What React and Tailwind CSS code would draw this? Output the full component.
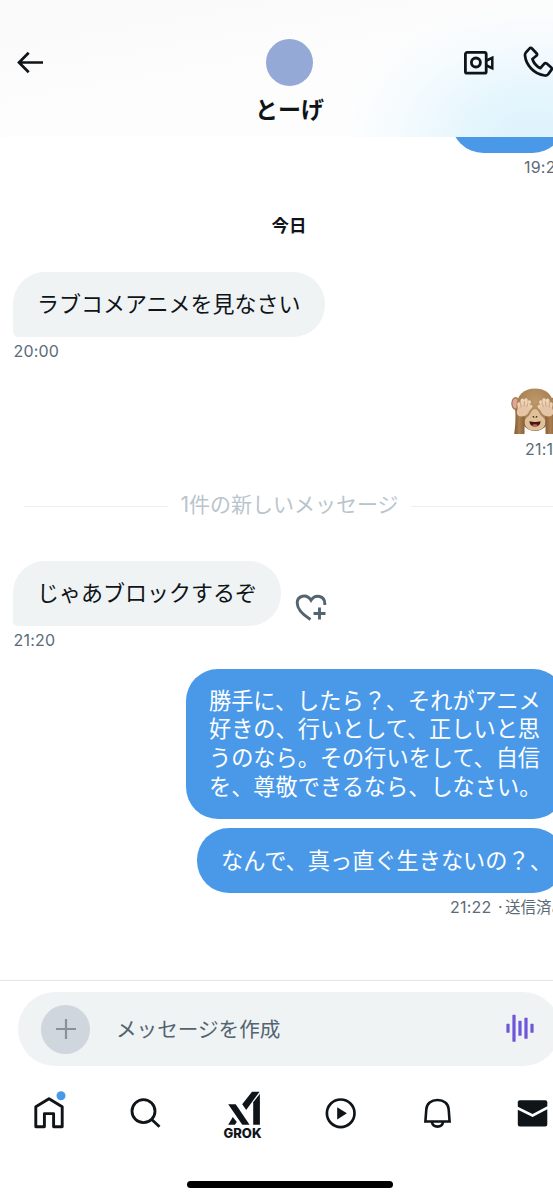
import React from "react";

const INK = "#0f1419";

function Time({ children, className = "" }) {
  return (
    <div className={`h-5 text-[16px] leading-5 tracking-[0.2px] whitespace-nowrap text-[#5b6b78] ${className}`}>
      {children}
    </div>
  );
}

function Incoming({ children }) {
  return (
    <div className="flex h-[65px] items-center rounded-[32px] rounded-bl-[5px] bg-[#eff3f4] px-6 text-[22px] leading-[28.6px] whitespace-nowrap text-[#0f1419]">
      <span className="-mt-px">{children}</span>
    </div>
  );
}

function Paw() {
  return (
    <>
      <path d="M5.200 23C7 20 14.500 23 14.500 30v17H4.200C5.400 40 5.800 30 5.200 23Z" fill="url(#arm)" />
      <g stroke="url(#hand)" strokeWidth="3.500" strokeLinecap="round">
        <path d="M10 24L9 17" />
        <path d="M11.500 23L12.300 13.300" />
        <path d="M13.500 23L16 13" />
        <path d="M15 24L19.300 15" />
        <path d="M15 25.500L20.800 19.500" />
      </g>
      <path d="M7.200 22.500C8.500 17 17 17 19.500 21c.5 4.500-3 8.500-7.800 8.500S6.200 26.500 7.200 22.500Z" fill="#e5c5a6" />
      <path d="M10.800 20L10.700 16M14 19L14.600 14.500M16.800 19.500L18 16" stroke="#bd9270" strokeWidth="0.700" strokeLinecap="round" />
    </>
  );
}

function Monkey() {
  return (
    <svg width="50" height="50" viewBox="0 0 50 50">
      <defs>
        <radialGradient id="fur" cx="50%" cy="30%" r="65%">
          <stop offset="0" stopColor="#bd986a" />
          <stop offset="0.7" stopColor="#a88152" />
          <stop offset="1" stopColor="#896238" />
        </radialGradient>
        <linearGradient id="arm" x1="0" x2="1" y1="0" y2="0">
          <stop offset="0" stopColor="#80592f" />
          <stop offset="0.5" stopColor="#aa8052" />
          <stop offset="1" stopColor="#896038" />
        </linearGradient>
        <linearGradient id="hand" gradientUnits="userSpaceOnUse" x1="0" x2="0" y1="11" y2="28">
          <stop offset="0" stopColor="#f0d6bd" />
          <stop offset="1" stopColor="#e5c5a6" />
        </linearGradient>
      </defs>
      <ellipse cx="5.500" cy="16.500" rx="4.200" ry="6.500" fill="#a27750" />
      <ellipse cx="5.500" cy="16.500" rx="3" ry="5" fill="#e3a39d" />
      <ellipse cx="44.500" cy="16.500" rx="4.200" ry="6.500" fill="#a27750" />
      <ellipse cx="44.500" cy="16.500" rx="3" ry="5" fill="#e3a39d" />
      <path d="M25 1.500C14 1.500 6.500 8 6.500 19c0 13 8 25 18.500 25s18.500-12 18.500-25C43.500 8 36 1.500 25 1.500Z" fill="url(#fur)" />
      <path d="M25 22c-3 0-4 4-6 6.500-3 2.500-4.500 4-4.500 6.500 0 5 4.500 8.500 10.500 8.500S35.500 40 35.500 35c0-2.500-1.500-4-4.500-6.500-2-2.500-3-6.500-6-6.500Z" fill="#dfc19c" />
      <path d="M19.500 34.300c3.500 1 7.500 1 11 0 .2 3-2.200 5.300-5.500 5.300s-5.700-2.300-5.500-5.300Z" fill="#45180f" />
      <path d="M22 38c1.800-1 4.200-1 6 0-1.500 1.700-4.500 1.700-6 0Z" fill="#d2645c" />
      <path d="M23.300 29.700l.4.300M26.700 29.700l-.4.300" stroke="#493020" strokeWidth="1.500" strokeLinecap="round" />
      <Paw />
      <g transform="matrix(-1 0 0 1 50 0)">
        <Paw />
      </g>
    </svg>
  );
}

function Header() {
  return (
    <header className="flex h-[137px] shrink-0 items-start bg-[radial-gradient(ellipse_190px_135px_at_92%_100%,#dcf2fc_0%,#e6f6fd_35%,#f5fbfe_70%,#ffffff00_100%),linear-gradient(170deg,#f9f9f9_0%,#fdfdfd_55%,#fefefe_100%)]">
      <div className="w-[193px] pt-[46px] pl-[14px]">
        <svg width="32" height="32" viewBox="0 0 32 32" fill="none" stroke={INK} strokeWidth="2.700">
          <path d="M29 16.500H5M14.700 6.700L5 16.500l9.700 9.700" />
        </svg>
      </div>
      <div className="flex w-[193px] flex-col items-center pt-[38.500px]">
        <div className="size-[47.500px] rounded-full bg-[#94a9d5]" />
        <div className="mt-[9px] text-[23px] leading-[30px] font-bold text-[#0f1419]">とーげ</div>
      </div>
      <div className="flex w-[192px] justify-end gap-[25px] pt-[44px] pr-[23px]">
        <svg width="34" height="36" viewBox="0 0 34 36" fill="none" stroke={INK} strokeWidth="2.800">
          <rect x="3.400" y="8.400" width="20.800" height="20.800" rx="1.800" />
          <circle cx="13.900" cy="18.500" r="4.500" />
          <path d="M24.500 16.500l5.800-2.700v10.400l-5.800-2.700" strokeWidth="2.500" />
        </svg>
        <svg width="34" height="36" viewBox="0 0 34 36" fill="none" stroke={INK} strokeWidth="2.700" strokeLinejoin="round">
          <path d="M8.400 4.600c.8-.9 1.800-.9 2.600-.1l4.500 4.700c.8.900.7 1.800-.1 2.600l-4 3.200c1.300 4.200 4 7.300 8 9.200l3.700-4.400c.7-.8 1.700-.9 2.600-.2l4.300 3.700c.9.800 1 1.800.2 2.800l-3 4.200c-.8 1.100-2 1.400-3.400 1.200C12.700 29.900 5 21 4 11.500c-.1-1.200.2-2.200 1-3.100l3.400-3.800Z" />
        </svg>
      </div>
    </header>
  );
}

function Thread() {
  return (
    <main className="flex h-[843px] shrink-0 flex-col px-[13px]">
      <div className="flex h-[15.500px] items-end justify-end overflow-hidden">
        <div className="h-[65px] w-[114px] shrink-0 rounded-[34px] bg-[#4a99e9]" />
      </div>
      <Time className="mt-[4.500px] pl-[511px]">19:26</Time>
      <div className="mt-[36.500px] h-6 text-center text-[17.500px] leading-6 font-bold text-[#0f1419]">今日</div>
      <div className="mt-[34.500px] flex">
        <Incoming>ラブコメアニメを見なさい</Incoming>
      </div>
      <Time className="mt-[4px] pl-[0.500px]">20:00</Time>
      <div className="mt-[26px] flex pl-[497px]">
        <Monkey />
      </div>
      <Time className="mt-[2px] pl-[512px]">21:10</Time>
      <div className="mt-[30px] flex h-[30px] items-center gap-[11px] pl-[11px] text-[21px] text-[#b9c5cd]">
        <div className="mt-[4px] h-px w-[144px] bg-[#eceeef]" />
        <span className="mt-[2px] w-[221px] text-center leading-[30px] whitespace-nowrap">1件の新しいメッセージ</span>
        <div className="mt-[4px] h-px flex-1 bg-[#eceeef]" />
      </div>
      <div className="mt-[42px] flex items-center gap-[13px]">
        <Incoming>じゃあブロックするぞ</Incoming>
        <svg className="mt-[29px]" width="34" height="32" viewBox="0 0 34 32" fill="none" stroke="#536471" strokeWidth="2.900">
          <path d="M16.500 27.500C8.500 22.500 3.200 16.500 3.200 11c0-7.500 9.500-9.600 13.800-2.700C21.300 1.400 30.800 4 30.800 11.500v1.500" />
          <path d="M25.500 15.500v12M19.500 21.500h12" />
        </svg>
      </div>
      <Time className="mt-[4px] pl-[0.500px]">21:20</Time>
      <div className="mt-[19px] flex h-[150px] w-[379px] items-center self-end rounded-[32px] bg-[#4a99e9] pl-[23px] text-[22.200px] leading-[28.600px] whitespace-nowrap text-white">
        <p>
          勝手に、したら？、それがアニメ<br />
          好きの、行いとして、正しいと思<br />
          うのなら。その行いをして、自信<br />
          を、尊敬できるなら、しなさい。
        </p>
      </div>
      <div className="mt-[9px] flex h-[65px] w-[368px] items-center self-end rounded-[32px] bg-[#4a99e9] pl-6 text-[22.200px] whitespace-nowrap text-white">
        <span>なんで、真っ直ぐ生きないの？、</span>
      </div>
      <Time className="mt-[4px] pl-[437px]">
        21:22 <span className="ml-[2px]">·</span><span className="ml-[2px] text-[15.500px] tracking-normal">送信済み</span>
      </Time>
    </main>
  );
}

const bars = [
  [8, 9],
  [14, 27],
  [20, 15],
  [26, 21],
  [32, 9],
];

function Composer() {
  return (
    <div className="h-[86px] shrink-0 border-t border-[#e4e7e9] px-[18px] pt-[11px]">
      <div className="flex h-[74px] items-center rounded-full bg-[#eff3f4] pr-[20px] pl-[23px]">
        <div className="grid size-[49px] place-items-center rounded-full bg-[#cfd6dd]">
          <svg width="22" height="22" viewBox="0 0 22 22" stroke="#8b9097" strokeWidth="2.200">
            <path d="M11 1v20M1 11h20" />
          </svg>
        </div>
        <span className="mt-px ml-[26px] flex-1 text-[20.600px] leading-[30px] text-[#536471]">メッセージを作成</span>
        <svg width="40" height="40" viewBox="0 0 40 40" fill="#6f56d9">
          {bars.map(([x, h]) => (
            <rect key={x} x={x - 1.6} y={19.3 - h / 2} width="3.200" height={h} rx="0.600" />
          ))}
        </svg>
      </div>
    </div>
  );
}

function Cell({ children }) {
  return <div className="flex w-[97px] shrink-0 justify-center">{children}</div>;
}

function Nav() {
  return (
    <nav className="flex h-[115px] shrink-0 pt-[22px]">
      <Cell>
        <svg width="40" height="44" viewBox="0 0 40 44" fill="none" stroke={INK} strokeWidth="2.900">
          <path d="M20 10.700L6.800 18.700v20.100h8.600V25.600h9.200v13.200h8.600V18.700L20 10.700Z" strokeLinejoin="round" />
          <circle cx="32" cy="7.800" r="4.500" fill="#4a99e9" stroke="none" />
        </svg>
      </Cell>
      <Cell>
        <svg width="40" height="44" viewBox="0 0 40 44" fill="none" stroke={INK} strokeWidth="2.800">
          <circle cx="17.500" cy="23.200" r="11.500" />
          <path d="M25.500 31.200l8 7.500" />
        </svg>
      </Cell>
      <Cell>
        <div className="flex flex-col items-center">
          <svg width="40" height="38" viewBox="0 0 40 38" fill={INK}>
            <path d="M5.200 16.300h7.500l13.900 20.400h-7.300L5.200 16.300Z" />
            <path d="M9.800 29l4 5.100-1.900 2.600H5.200L9.800 29Z" />
            <path d="M29 3.700h7.600L23.200 22l-4-5.700L29 3.700Z" />
            <path d="M36.900 5.700v31h-6.700V14.300l6.700-8.600Z" />
          </svg>
          <span className="font-[Inter,sans-serif] text-[13px] leading-[14px] font-extrabold text-[#0f1419]">GROK</span>
        </div>
      </Cell>
      <Cell>
        <svg width="40" height="44" viewBox="0 0 40 44" fill="none" stroke={INK} strokeWidth="2.700">
          <circle cx="20.700" cy="25.300" r="13.800" />
          <path d="M17.200 19.200v12.200l9.700-6.100-9.700-6.100Z" fill={INK} stroke="none" />
        </svg>
      </Cell>
      <Cell>
        <svg width="40" height="44" viewBox="0 0 40 44" fill="none" stroke={INK} strokeWidth="2.600">
          <path d="M9.300 21.500C9.600 15.500 14.300 12 20.500 12s10.900 3.500 11.200 9.500l.9 12H8.400l.9-12Z" />
          <path d="M14.800 34c.7 3 2.700 4.600 5.700 4.600s5-1.600 5.700-4.600" />
        </svg>
      </Cell>
      <Cell>
        <svg width="40" height="44" viewBox="0 0 40 44" fill={INK}>
          <path d="M3.800 14.200q0-2 2-2h25.500q2 0 2 2v4L18.600 26 3.800 18.700v-4.500Z" />
          <path d="M3.800 21.800l14.800 7.300 14.700-7.800v15.200q0 2-2 2H5.800q-2 0-2-2V21.800Z" />
        </svg>
      </Cell>
    </nav>
  );
}

export default function App() {
  return (
    <div
      className="h-[1200px] w-[553px] overflow-hidden bg-white font-[Inter,'Noto_Sans_CJK_JP',sans-serif]"
      lang="ja"
    >
      <div className="flex h-[1181px] w-[578px] flex-col">
        <Header />
        <Thread />
        <Composer />
        <Nav />
      </div>
      <div className="ml-[187px] h-[7px] w-[206px] rounded-full bg-black" />
    </div>
  );
}
